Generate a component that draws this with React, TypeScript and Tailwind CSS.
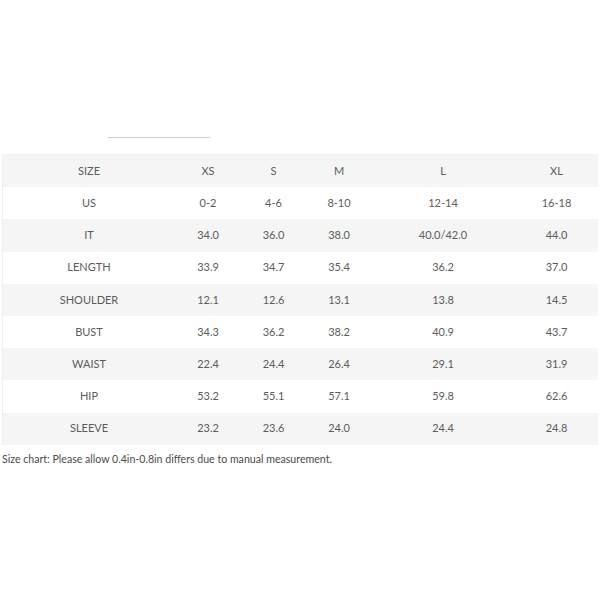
const rows: string[][] = [
  ['SIZE', 'XS', 'S', 'M', 'L', 'XL'],
  ['US', '0-2', '4-6', '8-10', '12-14', '16-18'],
  ['IT', '34.0', '36.0', '38.0', '40.0/42.0', '44.0'],
  ['LENGTH', '33.9', '34.7', '35.4', '36.2', '37.0'],
  ['SHOULDER', '12.1', '12.6', '13.1', '13.8', '14.5'],
  ['BUST', '34.3', '36.2', '38.2', '40.9', '43.7'],
  ['WAIST', '22.4', '24.4', '26.4', '29.1', '31.9'],
  ['HIP', '53.2', '55.1', '57.1', '59.8', '62.6'],
  ['SLEEVE', '23.2', '23.6', '24.0', '24.4', '24.8'],
];

const App = () => {
  return (
    <div className="w-[600px] h-[600px] bg-white font-['Lato',sans-serif] text-[11px]">
      <div className="pt-[137px] pl-[108px]">
        <div className="w-[102px] h-px bg-[#cfcfcf]" />
      </div>
      <div className="mt-[16px] ml-[2px] mr-[2px] border-t border-l border-[#f0f0f0]">
        {rows.map((row, i) => (
          <div
            key={row[0]}
            className={`grid grid-cols-[172px_66px_65px_66px_142px_85px] h-[32.2px] items-center text-center text-[#5c5c5c] ${
              i % 2 === 0 ? 'bg-[#f5f5f5]' : 'bg-white'
            }`}
          >
            {row.map((cell, j) => (
              <div key={j}>{cell}</div>
            ))}
          </div>
        ))}
      </div>
      <p className="mt-[7px] pl-[2px] text-[10.6px] text-[#4a4a4a]">
        Size chart: Please allow 0.4in-0.8in differs due to manual measurement.
      </p>
    </div>
  );
};

export default App;
